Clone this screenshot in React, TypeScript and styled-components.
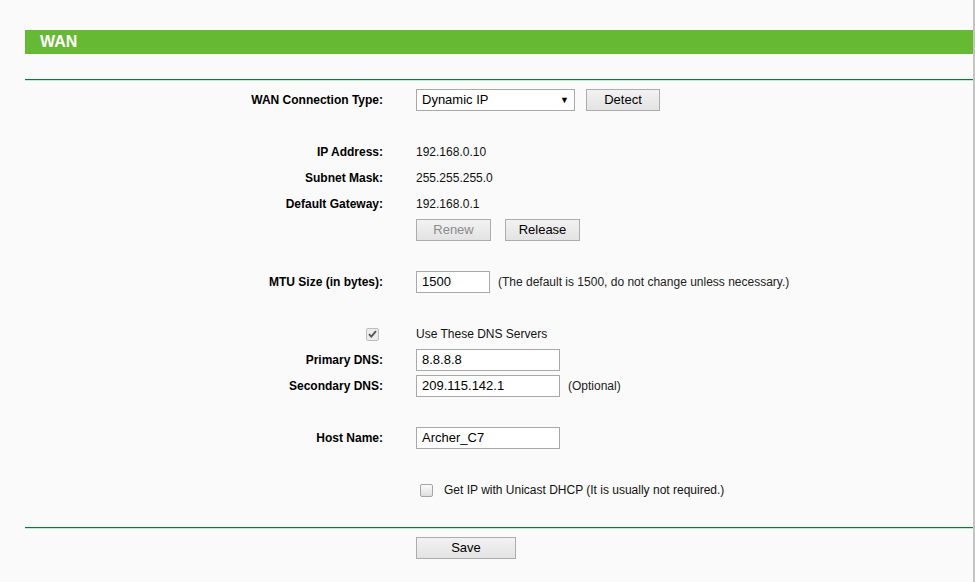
import React from 'react';
import styled, { createGlobalStyle } from 'styled-components';

const GlobalStyle = createGlobalStyle`
	html, body {
		margin: 0;
		padding: 0;
		background: #fafafa;
		font-family: 'Liberation Sans', Arial, sans-serif;
		font-size: 12px;
		color: #000;
	}
`;

const Page = styled.div`
	display: flex;
	height: 582px;
	padding-left: 25px;
	box-sizing: border-box;
`;

const Panel = styled.div`
	width: 948px;
	padding-top: 30px;
	border-right: 2px solid #c4c4c4;
	display: flex;
	flex-direction: column;
`;

const TitleBar = styled.div`
	height: 24px;
	background: #66b933;
	color: #fff;
	font-weight: bold;
	font-size: 16px;
	line-height: 24px;
	padding-left: 15px;
`;

const Divider = styled.div<{ $top: number }>`
	margin-top: ${({ $top }): number => $top}px;
	height: 1px;
	background: #08793a;
	box-shadow: 0 1px 0 #c9e6d0;
`;

const Form = styled.div`
	padding-top: 7px;
	display: flex;
	flex-direction: column;
`;

const Row = styled.div`
	display: grid;
	grid-template-columns: 358px 1fr;
	column-gap: 33px;
	height: 26px;
	align-items: center;
`;

const Spacer = styled.div`
	height: 26px;
`;

const Label = styled.div`
	text-align: right;
	font-weight: bold;
	display: flex;
	justify-content: flex-end;
	align-items: center;
`;

const Field = styled.div<{ $indent?: number; $gap?: number }>`
	display: flex;
	align-items: center;
	gap: ${({ $gap }): number => $gap ?? 8}px;
	padding-left: ${({ $indent }): number => $indent ?? 0}px;
`;

const Value = styled.span`
	color: #111;
`;

const Note = styled.span`
	color: #222;
`;

const TextBox = styled.div<{ $width: number }>`
	width: ${({ $width }): number => $width}px;
	height: 22px;
	box-sizing: border-box;
	border: 1px solid #a9a9a9;
	background: #fff;
	font-size: 13px;
	line-height: 20px;
	padding-left: 5px;
	color: #000;
`;

const Select = styled(TextBox)`
	display: flex;
	justify-content: space-between;
	align-items: center;
	padding-right: 5px;
`;

const Arrow = styled.span`
	font-size: 9px;
`;

const Button = styled.div<{ $width: number; $disabled?: boolean; $gap?: number }>`
	width: ${({ $width }): number => $width}px;
	height: 22px;
	box-sizing: border-box;
	margin-left: ${({ $gap }): number => $gap ?? 0}px;
	border: 1px solid #acacac;
	background: linear-gradient(#f2f2f2, #e3e3e3);
	font-size: 13px;
	line-height: 20px;
	text-align: center;
	color: ${({ $disabled }): string => ($disabled ? '#8c8c8c' : '#000')};
`;

const Buttons = styled.div`
	display: flex;
	align-items: center;
`;

const CheckBox = styled.div<{ $checked?: boolean }>`
	width: 13px;
	height: 13px;
	box-sizing: border-box;
	border: 1px solid ${({ $checked }): string => ($checked ? '#bdbdbd' : '#a5a5a5')};
	border-radius: 2px;
	background: ${({ $checked }): string =>
		$checked ? '#ececec' : 'linear-gradient(#fbfbfb, #dedede)'};
	display: flex;
	align-items: center;
	justify-content: center;
	margin-right: ${({ $checked }): number => ($checked ? 4 : 0)}px;
`;

const SaveRow = styled(Row)`
	margin-top: 7px;
`;

const Check: React.FC = () => (
	<svg width="9" height="8" viewBox="0 0 9 8">
		<path d="M1 4.2 L3.3 6.6 L8 1.2" stroke="#555" strokeWidth="1.9" fill="none" />
	</svg>
);

export default function App(): JSX.Element {
	return (
		<>
			<GlobalStyle />
			<Page>
				<Panel>
					<TitleBar>WAN</TitleBar>
					<Divider $top={25} />
					<Form>
						<Row>
							<Label>WAN Connection Type:</Label>
							<Buttons>
								<Select $width={159}>
									<span>Dynamic IP</span>
									<Arrow>▼</Arrow>
								</Select>
								<Button $width={74} $gap={11}>
									Detect
								</Button>
							</Buttons>
						</Row>
						<Spacer />
						<Row>
							<Label>IP Address:</Label>
							<Value>192.168.0.10</Value>
						</Row>
						<Row>
							<Label>Subnet Mask:</Label>
							<Value>255.255.255.0</Value>
						</Row>
						<Row>
							<Label>Default Gateway:</Label>
							<Value>192.168.0.1</Value>
						</Row>
						<Row>
							<Label />
							<Buttons>
								<Button $width={75} $disabled>
									Renew
								</Button>
								<Button $width={75} $gap={14}>
									Release
								</Button>
							</Buttons>
						</Row>
						<Spacer />
						<Row>
							<Label>MTU Size (in bytes):</Label>
							<Field>
								<TextBox $width={74}>1500</TextBox>
								<Note>(The default is 1500, do not change unless necessary.)</Note>
							</Field>
						</Row>
						<Spacer />
						<Row>
							<Label>
								<CheckBox $checked>
									<Check />
								</CheckBox>
							</Label>
							<Value>Use These DNS Servers</Value>
						</Row>
						<Row>
							<Label>Primary DNS:</Label>
							<Field>
								<TextBox $width={144}>8.8.8.8</TextBox>
							</Field>
						</Row>
						<Row>
							<Label>Secondary DNS:</Label>
							<Field>
								<TextBox $width={144}>209.115.142.1</TextBox>
								<Note>(Optional)</Note>
							</Field>
						</Row>
						<Spacer />
						<Row>
							<Label>Host Name:</Label>
							<Field>
								<TextBox $width={144}>Archer_C7</TextBox>
							</Field>
						</Row>
						<Spacer />
						<Row>
							<Label />
							<Field $indent={4} $gap={11}>
								<CheckBox />
								<Value>Get IP with Unicast DHCP (It is usually not required.)</Value>
							</Field>
						</Row>
					</Form>
					<Divider $top={24} />
					<SaveRow>
						<Label />
						<Button $width={100}>Save</Button>
					</SaveRow>
				</Panel>
			</Page>
		</>
	);
}
